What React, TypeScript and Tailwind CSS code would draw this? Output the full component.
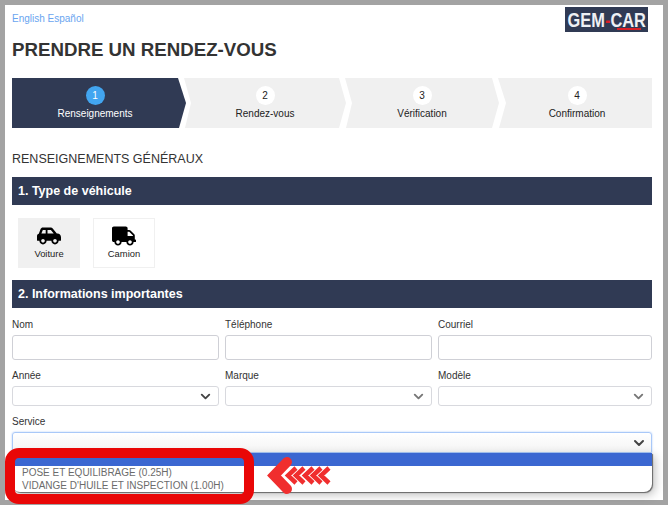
import { ChevronDown } from "lucide-react";
import { FaCarSide, FaTruck } from "react-icons/fa";

const steps = [
  {
    num: "1",
    label: "Renseignements",
    box: "w-[174px] pr-2 bg-[#303a54] text-white [clip-path:polygon(0_0,166px_0,174px_50%,167px_100%,0_100%)]",
    circle: "bg-[#42a5f0] text-white",
  },
  {
    num: "2",
    label: "Rendez-vous",
    box: "w-[162px] -ml-[2px] bg-[#f0f0f0] text-[#222] [clip-path:polygon(0_0,155px_0,162px_50%,155px_100%,1px_100%,7px_50%)]",
    circle: "bg-white text-[#222]",
  },
  {
    num: "3",
    label: "Vérification",
    box: "w-[154px] -ml-[1px] bg-[#f0f0f0] text-[#222] [clip-path:polygon(0_0,147px_0,154px_50%,147px_100%,1px_100%,7px_50%)]",
    circle: "bg-white text-[#222]",
  },
  {
    num: "4",
    label: "Confirmation",
    box: "flex-1 -ml-[1px] pl-1 bg-[#f0f0f0] text-[#222] [clip-path:polygon(0_0,100%_0,100%_100%,1px_100%,8px_50%)]",
    circle: "bg-white text-[#222]",
  },
];

function SectionBar({ title }: { title: string }) {
  return (
    <div className="flex h-7 items-center bg-[#303a54] px-[6px] text-[12.5px] font-bold text-white">
      {title}
    </div>
  );
}

function TextField({ label }: { label: string }) {
  return (
    <div>
      <label className="block h-[15px] text-[10px] leading-[10px] text-[#333]">{label}</label>
      <div className="h-[25px] rounded-[3px] border border-[#cfd0d6] bg-white" />
    </div>
  );
}

function SelectField({ label, dark }: { label: string; dark?: boolean }) {
  return (
    <div>
      <label className="block h-[15px] text-[10px] leading-[10px] text-[#333]">{label}</label>
      <div className="flex h-5 items-center justify-end rounded-[3px] border border-[#d8d9de] bg-white pr-[5px]">
        <ChevronDown size={15} strokeWidth={3} className={dark ? "text-[#444]" : "text-[#777]"} />
      </div>
    </div>
  );
}

export default function App() {
  return (
    <div className="h-[505px] w-[668px] overflow-hidden bg-[#a3a3a3] p-[5px] font-['Liberation_Sans',Arial,sans-serif]">
      <div className="relative h-[495px] bg-white pl-[7px] pr-[11px]">
        <div className="flex h-[27px] justify-between pt-[2px] pr-[4px]">
          <div className="pt-[5px] text-[10px] leading-[13px] text-[#6aa5f0]">English Español</div>
          <div className="relative flex h-[25px] w-[83px] items-center justify-center overflow-hidden bg-[#303a54] text-[20px] font-bold leading-none text-[#eef0f4]">
            <span className="shrink-0 scale-x-[0.82] whitespace-nowrap">
              GEM<span className="text-[#d81f26]">-</span>CAR
            </span>
            <div className="absolute bottom-[2px] right-[7px] h-[2px] w-[24px] bg-[#d81f26]" />
          </div>
        </div>

        <h1 className="mt-0 h-[36px] text-[18.7px] font-bold leading-[36px] text-[#333]">PRENDRE UN RENDEZ-VOUS</h1>

        <div className="mt-[10px] flex h-[50px]">
          {steps.map((s) => (
            <div key={s.num} className={`flex h-full shrink-0 flex-col items-center pt-[8px] ${s.box}`}>
              <div className={`flex size-[19px] items-center justify-center rounded-full text-[10px] ${s.circle}`}>
                {s.num}
              </div>
              <div className="mt-[1px] text-[10px] leading-[16px]">{s.label}</div>
            </div>
          ))}
        </div>

        <h2 className="mt-[22px] h-[18px] text-[12.5px] leading-[18px] text-[#333]">RENSEIGNEMENTS GÉNÉRAUX</h2>

        <div className="mt-[9px]">
          <SectionBar title="1. Type de véhicule" />
        </div>

        <div className="mt-[13px] flex gap-[13px] pl-[6px]">
          <div className="flex h-[50px] w-[62px] flex-col items-center bg-[#f0f0f0] pt-[6px]">
            <FaCarSide size={24} className="text-black" />
            <span className="-mt-[1px] text-[9.4px] leading-[13px] text-[#222]">Voiture</span>
          </div>
          <div className="flex h-[50px] w-[62px] flex-col items-center border border-[#f0f0f0] pt-[5px]">
            <FaTruck size={24} className="text-black" />
            <span className="-mt-[1px] text-[9.4px] leading-[13px] text-[#222]">Camion</span>
          </div>
        </div>

        <div className="mt-[12px]">
          <SectionBar title="2. Informations importantes" />
        </div>

        <div className="mt-[12px] grid grid-cols-[207px_207px_214px] gap-x-[6px]">
          <TextField label="Nom" />
          <TextField label="Téléphone" />
          <TextField label="Courriel" />
        </div>

        <div className="mt-[11px] grid grid-cols-[207px_207px_214px] gap-x-[6px]">
          <SelectField label="Année" dark />
          <SelectField label="Marque" />
          <SelectField label="Modèle" />
        </div>

        <div className="mt-[11px]">
          <label className="block h-[15px] text-[10px] leading-[10px] text-[#333]">Service</label>
          <div className="flex h-[21px] items-center justify-end rounded-t-[3px] border border-[#a9c8f8] bg-gradient-to-b from-white to-[#f4f4f4] pr-[4px] shadow-[0_0_2px_#a9c8f8]">
            <ChevronDown size={16} strokeWidth={3} className="text-[#444]" />
          </div>
        </div>

        {/* open options list */}
        <div className="absolute left-[7px] top-[448px] w-[640px] overflow-hidden rounded-b-[8px] bg-white shadow-[1px_1px_1px_#666,3px_3px_10px_rgba(0,0,0,0.25)]">
          <div className="h-[13px] bg-[#3b67d1]" />
          <div className="h-[26px] pl-[10px] text-[10px] leading-[13px] text-[#6b6b6b]">
            <div>POSE ET EQUILIBRAGE (0.25H)</div>
            <div>VIDANGE D'HUILE ET INSPECTION (1.00H)</div>
          </div>
        </div>

        {/* red highlight frame */}
        <div className="absolute left-0 top-[443px] h-[56px] w-[249px] rounded-[14px] border-[10px] border-[#e90707]" />

        {/* red arrow */}
        <svg className="absolute left-[261px] top-[451px]" width="66" height="42" viewBox="0 0 66 42">
          <path d="M21 6 L8 19.5 L21 33" fill="none" stroke="#f02e2e" strokeWidth="10" strokeLinecap="round" strokeLinejoin="miter" />
          <path d="M30 12 L22 19.5 L30 27 M38 12 L30 19.5 L38 27 M47 12 L39 19.5 L47 27 M55 12 L47 19.5 L55 27 M63 12 L55 19.5 L63 27" fill="none" stroke="#f02e2e" strokeWidth="4.5" />
        </svg>
      </div>
    </div>
  );
}
